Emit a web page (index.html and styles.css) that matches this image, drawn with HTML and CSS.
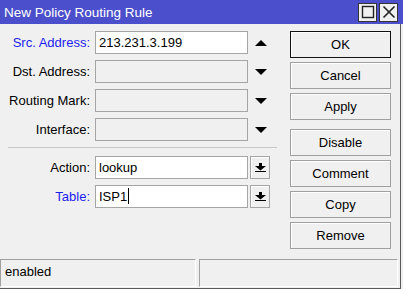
FILE: index.html
```html
<!DOCTYPE html>
<html lang="en">
<head>
  <meta charset="UTF-8" />
  <title>New Policy Routing Rule</title>
  <link rel="stylesheet" href="styles.css">
</head>
<body>

  <div class="titlebar">
    <span class="title">New Policy Routing Rule</span>
    <span class="tbtn">
      <svg width="16" height="16" viewBox="0 0 16 16"><rect x="2.5" y="2.5" width="11" height="11" fill="none" stroke="#222" stroke-width="1.4"/></svg>
    </span>
    <span class="tbtn">
      <svg width="16" height="16" viewBox="0 0 16 16"><path d="M2.5 2.5 L13.5 13.5 M13.5 2.5 L2.5 13.5" stroke="#222" stroke-width="1.6"/></svg>
    </span>
  </div>

  <div class="window">
    <div class="main">
      <div class="form">
        <div class="row">
          <label class="lbl blue">Src. Address:</label>
          <div class="field white">213.231.3.199</div>
          <div class="icon"><svg width="12" height="6" viewBox="0 0 12 6"><polygon points="6,0 12,6 0,6" fill="#000"/></svg></div>
        </div>
        <div class="row">
          <label class="lbl">Dst. Address:</label>
          <div class="field"></div>
          <div class="icon"><svg width="12" height="6" viewBox="0 0 12 6"><polygon points="0,0 12,0 6,6" fill="#000"/></svg></div>
        </div>
        <div class="row">
          <label class="lbl">Routing Mark:</label>
          <div class="field"></div>
          <div class="icon"><svg width="12" height="6" viewBox="0 0 12 6"><polygon points="0,0 12,0 6,6" fill="#000"/></svg></div>
        </div>
        <div class="row">
          <label class="lbl">Interface:</label>
          <div class="field"></div>
          <div class="icon"><svg width="12" height="6" viewBox="0 0 12 6"><polygon points="0,0 12,0 6,6" fill="#000"/></svg></div>
        </div>

        <div class="sep"></div>

        <div class="row">
          <label class="lbl">Action:</label>
          <div class="field white">lookup</div>
          <div class="drop"><svg width="11" height="9" viewBox="0 0 11 9"><rect x="4" y="0" width="3" height="3" fill="#000"/><polygon points="0,3 11,3 5.5,7.5" fill="#000"/><rect x="0" y="8" width="11" height="1" fill="#000"/></svg></div>
        </div>
        <div class="row">
          <label class="lbl blue">Table:</label>
          <div class="field white">ISP1<span class="caret"></span></div>
          <div class="drop"><svg width="11" height="9" viewBox="0 0 11 9"><rect x="4" y="0" width="3" height="3" fill="#000"/><polygon points="0,3 11,3 5.5,7.5" fill="#000"/><rect x="0" y="8" width="11" height="1" fill="#000"/></svg></div>
        </div>
      </div>

      <div class="buttons">
        <button class="btn default">OK</button>
        <button class="btn">Cancel</button>
        <button class="btn">Apply</button>
        <button class="btn spaced">Disable</button>
        <button class="btn">Comment</button>
        <button class="btn">Copy</button>
        <button class="btn">Remove</button>
      </div>
    </div>

    <div class="status">
      <div class="cell first">enabled</div>
      <div class="cell second"></div>
    </div>
  </div>

</body>
</html>
```

FILE: styles.css
```css
body {
  margin: 0;
  width: 403px;
  height: 289px;
  background: #f0f0f0;
  font-family: "Liberation Sans", Arial, sans-serif;
  font-size: 13px;
  color: #000;
  overflow: hidden;
}

.titlebar {
  height: 24px;
  background: #4b4fcb;
  display: flex;
  align-items: center;
  padding: 0 5px 0 4px;
  box-sizing: border-box;
}

.title {
  color: #fff;
  font-size: 13.5px;
  flex: 1;
}

.tbtn {
  width: 17px;
  height: 17px;
  margin-left: 2px;
  background: #f0f0f0;
  border: 1px solid #333;
  display: flex;
  align-items: center;
  justify-content: center;
}

.window {
  width: 400px;
  height: 264px;
  border-right: 1px solid #5a5a5a;
  border-bottom: 1px solid #5a5a5a;
}

.main {
  display: flex;
  height: 235px;
}

.form {
  padding: 7px 0 0 8px;
  width: 269px;
}

.row {
  display: flex;
  align-items: center;
  height: 23px;
  margin-bottom: 6px;
}

.lbl {
  width: 82px;
  margin-right: 5px;
  text-align: right;
}

.blue {
  color: #1c1cf0;
}

.field {
  width: 153px;
  height: 23px;
  box-sizing: border-box;
  border: 1px solid #a5a5a5;
  padding: 2px 0 0 3px;
  line-height: 17px;
}

.white {
  background: #fff;
}

.caret {
  display: inline-block;
  width: 1px;
  height: 16px;
  background: #000;
  vertical-align: -3px;
  margin-left: 1px;
}

.icon {
  width: 22px;
  margin-left: 2px;
  display: flex;
  justify-content: center;
}

.drop {
  width: 20px;
  height: 23px;
  margin-left: 2px;
  box-sizing: border-box;
  border: 1px solid #a5a5a5;
  box-shadow: inset 1px 1px #fff;
  display: flex;
  align-items: center;
  justify-content: center;
}

.sep {
  border-top: 1px solid #c8c8c8;
  margin: 3px 0 8px 0;
  width: 269px;
}

.buttons {
  display: flex;
  flex-direction: column;
  gap: 4px;
  padding: 7px 0 0 13px;
}

.btn {
  width: 101px;
  height: 27px;
  margin: 0;
  padding: 0;
  box-sizing: border-box;
  background: #f0f0f0;
  border: 1px solid #a0a0a0;
  box-shadow: inset 1px 1px #fff;
  font-family: "Liberation Sans", Arial, sans-serif;
  font-size: 13px;
  color: #000;
}

.btn.default {
  border-color: #111;
}

.btn.spaced {
  margin-top: 5px;
}

.status {
  display: flex;
  gap: 3px;
}

.cell {
  height: 28px;
  box-sizing: border-box;
  border-top: 1px solid #a0a0a0;
  border-left: 1px solid #a0a0a0;
  border-bottom: 1px solid #fff;
  border-right: 1px solid #fff;
  padding: 4px 0 0 4px;
}

.first {
  width: 196px;
}

.second {
  width: 199px;
}
```
